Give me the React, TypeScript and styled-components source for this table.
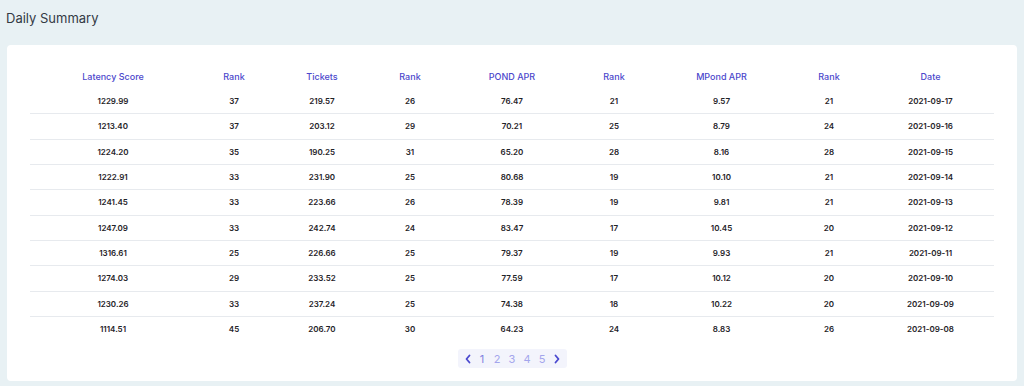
import React from 'react';
import styled, { createGlobalStyle } from 'styled-components';

const GlobalStyle = createGlobalStyle`
  html, body {
    margin: 0;
    padding: 0;
    background: #e8f1f4;
    font-family: Inter, "Noto Sans", sans-serif;
  }
`;

const Page = styled.div`
  width: 1024px;
  height: 386px;
  padding: 9px 7px 0 7px;
  box-sizing: border-box;
`;

const Title = styled.h1`
  margin: 0 0 0 -1px;
  font-size: 13px;
  font-weight: 400;
  color: #333a44;
  line-height: 18px;
  height: 36px;
`;

const Card = styled.div`
  background: #fff;
  border-radius: 4px;
  padding: 19px 23px 12px;
  box-sizing: border-box;
  height: 336px;
  display: flex;
  flex-direction: column;
  align-items: center;
`;

const Table = styled.table`
  width: 964px;
  border-collapse: collapse;
  table-layout: fixed;
`;

const HeadCell = styled.th`
  height: 25px;
  padding: 0;
  font-size: 9px;
  font-weight: 500;
  color: #4c48cc;
  text-align: center;
  vertical-align: middle;
`;

const Row = styled.tr`
  & + & td {
    border-top: 1px solid #e7eaee;
  }
`;

const Cell = styled.td`
  height: 24.33px;
  padding: 0;
  line-height: 10px;
  font-size: 8px;
  font-weight: 600;
  color: #1f2328;
  text-align: center;
  vertical-align: middle;
`;

const Pager = styled.div`
  margin-top: 8px;
  display: flex;
  align-items: center;
  height: 19px;
  padding: 0 3px;
  background: #f3f4fc;
  border-radius: 3px;
`;

const PageNum = styled.span<{ $active?: boolean }>`
  width: 15px;
  text-align: center;
  font-size: 11px;
  color: ${(p) => (p.$active ? '#8082e0' : '#a3a5ec')};
`;

const Arrow = styled.span`
  width: 14px;
  display: flex;
  justify-content: center;
  align-items: center;
`;

const Chevron = ({ dir }: { dir: 'left' | 'right' }) => (
  <svg width="8" height="10" viewBox="0 0 8 10">
    <path
      d={dir === 'left' ? 'M5.5 1.5 L2.5 5 L5.5 8.5' : 'M2.5 1.5 L5.5 5 L2.5 8.5'}
      fill="none"
      stroke="#4a48cf"
      strokeWidth="1.8"
      strokeLinecap="round"
      strokeLinejoin="round"
    />
  </svg>
);

const widths = [166, 76, 100, 76, 128, 76, 139, 76, 127];
const headers = ['Latency Score', 'Rank', 'Tickets', 'Rank', 'POND APR', 'Rank', 'MPond APR', 'Rank', 'Date'];

const rows: string[][] = [
  ['1229.99', '37', '219.57', '26', '76.47', '21', '9.57', '21', '2021-09-17'],
  ['1213.40', '37', '203.12', '29', '70.21', '25', '8.79', '24', '2021-09-16'],
  ['1224.20', '35', '190.25', '31', '65.20', '28', '8.16', '28', '2021-09-15'],
  ['1222.91', '33', '231.90', '25', '80.68', '19', '10.10', '21', '2021-09-14'],
  ['1241.45', '33', '223.66', '26', '78.39', '19', '9.81', '21', '2021-09-13'],
  ['1247.09', '33', '242.74', '24', '83.47', '17', '10.45', '20', '2021-09-12'],
  ['1316.61', '25', '226.66', '25', '79.37', '19', '9.93', '21', '2021-09-11'],
  ['1274.03', '29', '233.52', '25', '77.59', '17', '10.12', '20', '2021-09-10'],
  ['1230.26', '33', '237.24', '25', '74.38', '18', '10.22', '20', '2021-09-09'],
  ['1114.51', '45', '206.70', '30', '64.23', '24', '8.83', '26', '2021-09-08'],
];

export default function App() {
  return (
    <>
      <GlobalStyle />
      <Page>
        <Title>Daily Summary</Title>
        <Card>
          <Table>
            <colgroup>
              {widths.map((w, i) => (
                <col key={i} style={{ width: w }} />
              ))}
            </colgroup>
            <thead>
              <tr>
                {headers.map((h, i) => (
                  <HeadCell key={i}>{h}</HeadCell>
                ))}
              </tr>
            </thead>
            <tbody>
              {rows.map((r, i) => (
                <Row key={i}>
                  {r.map((c, j) => (
                    <Cell key={j}>{c}</Cell>
                  ))}
                </Row>
              ))}
            </tbody>
          </Table>
          <Pager>
            <Arrow>
              <Chevron dir="left" />
            </Arrow>
            {[1, 2, 3, 4, 5].map((n) => (
              <PageNum key={n} $active={n === 1}>
                {n}
              </PageNum>
            ))}
            <Arrow>
              <Chevron dir="right" />
            </Arrow>
          </Pager>
        </Card>
      </Page>
    </>
  );
}
